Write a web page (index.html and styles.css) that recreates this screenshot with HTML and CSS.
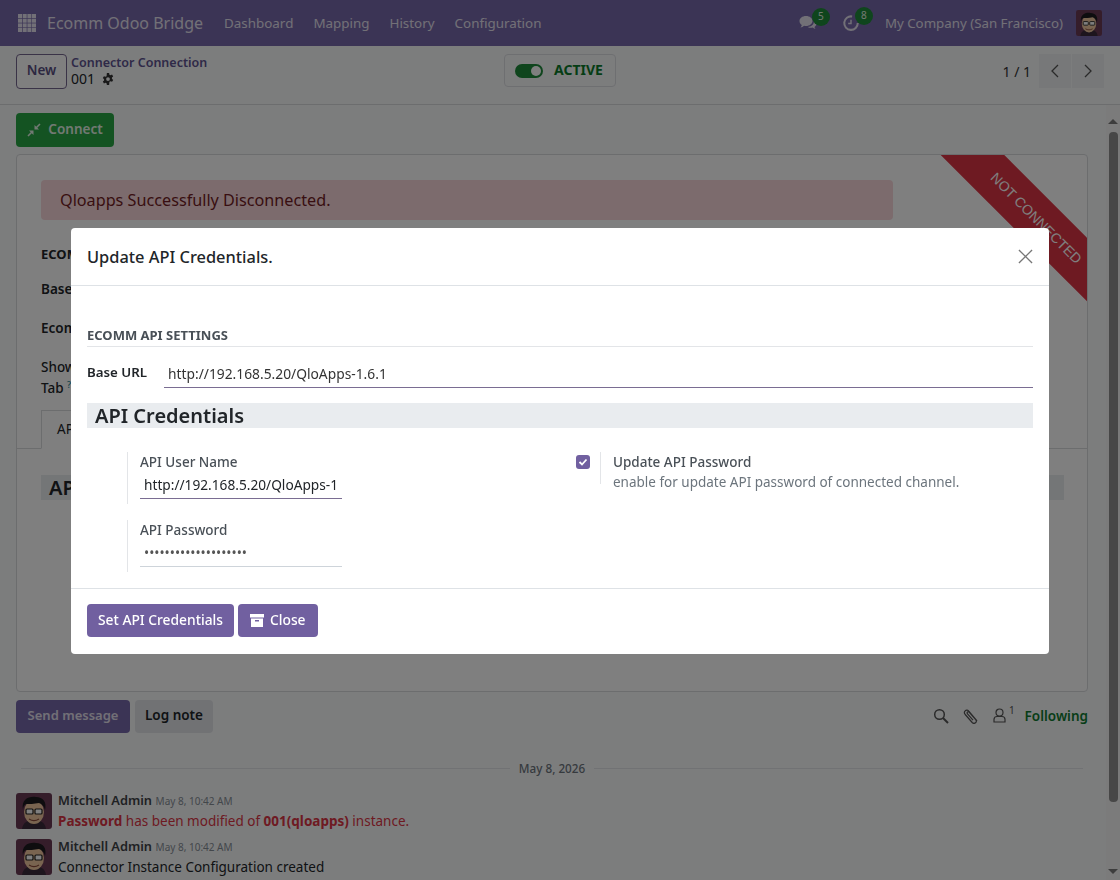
FILE: index.html
```html
<!DOCTYPE html>
<html lang="en">
<head>
    <meta charset="UTF-8">
    <title>Connector Connection</title>
    <link rel="stylesheet" href="styles.css">
</head>
<body>
    <svg class="defs" width="0" height="0">
        <symbol id="face" viewBox="0 0 36 36">
            <rect width="36" height="36" rx="3" fill="#6b3a55"/>
            <path d="M6 36c1-7 6-9 12-9s11 2 12 9z" fill="#3a2a3a"/>
            <ellipse cx="18" cy="19" rx="10" ry="12" fill="#f2c9a0"/>
            <path d="M7 17C5 6 13 3 20 4c7 0 11 5 9 13-1-4-3-6-6-7-5 1-10 1-13 1-2 1-3 3-3 6z" fill="#1c1a1e"/>
            <rect x="10" y="16" width="7" height="5" rx="1" fill="#fff" stroke="#222" stroke-width="1.2"/>
            <rect x="19" y="16" width="7" height="5" rx="1" fill="#fff" stroke="#222" stroke-width="1.2"/>
            <path d="M13 26c3 2 7 2 10 0" fill="none" stroke="#8a4a3a" stroke-width="1.2"/>
        </symbol>
    </svg>

    <nav class="navbar">
        <svg class="apps-icon" width="18" height="18" viewBox="0 0 18 18" fill="#e4e1ee">
            <rect x="0" y="0" width="4" height="4"/><rect x="4.7" y="0" width="4" height="4"/><rect x="9.4" y="0" width="4" height="4"/><rect x="14" y="0" width="4" height="4"/>
            <rect x="0" y="4.7" width="4" height="4"/><rect x="4.7" y="4.7" width="4" height="4"/><rect x="9.4" y="4.7" width="4" height="4"/><rect x="14" y="4.7" width="4" height="4"/>
            <rect x="0" y="9.4" width="4" height="4"/><rect x="4.7" y="9.4" width="4" height="4"/><rect x="9.4" y="9.4" width="4" height="4"/><rect x="14" y="9.4" width="4" height="4"/>
            <rect x="0" y="14" width="4" height="4"/><rect x="4.7" y="14" width="4" height="4"/><rect x="9.4" y="14" width="4" height="4"/><rect x="14" y="14" width="4" height="4"/>
        </svg>
        <span class="brand">Ecomm Odoo Bridge</span>
        <a class="nav-link">Dashboard</a>
        <a class="nav-link">Mapping</a>
        <a class="nav-link">History</a>
        <a class="nav-link">Configuration</a>
        <div class="nav-right">
            <span class="systray-item">
                <svg width="18" height="16" viewBox="0 0 18 16" fill="#e4e1ee"><path d="M7 1c3.700 0 6.500 2.200 6.500 5s-2.800 5-6.500 5c-.7 0-1.300-.1-1.900-.2C4 11.800 2.800 12.300 1.500 12.500c.7-.8 1.200-1.600 1.300-2.500C1.300 9.100.5 7.600.5 6 .5 3.200 3.300 1 7 1z"/><path d="M14.600 4.700C16.500 5.500 17.500 6.900 17.500 8.500c0 1.400-.8 2.600-2 3.400.1.800.6 1.500 1.200 2.100-1.100-.2-2.100-.6-3-1.400-.5.100-1 .2-1.600.2-1.300 0-2.500-.3-3.400-.9 3.500-.1 6.300-2.500 6.300-5.400 0-.6-.1-1.200-.4-1.800z"/></svg>
                <span class="badge">5</span>
            </span>
            <span class="systray-item">
                <svg width="18" height="18" viewBox="0 0 16 16" fill="none" stroke="#e4e1ee" stroke-width="1.800"><path d="M9 2.200A6 6 0 1 0 14 8"/><path d="M8 5v3.500H5.500" stroke-width="1.300"/></svg>
                <span class="badge">8</span>
            </span>
            <span class="company">My Company (San Francisco)</span>
            <svg class="nav-avatar" width="26" height="26"><use href="#face"/></svg>
        </div>
    </nav>

    <header class="control-panel">
        <div class="cp-left">
            <button class="btn-new">New</button>
            <div class="breadcrumb">
                <a class="crumb-link">Connector Connection</a>
                <div class="crumb-current">001
                    <svg width="12" height="12" viewBox="0 0 16 16" fill="#333"><path d="M6.500 0h3l.4 2.200c.5.200 1 .4 1.400.7l2.100-.8 1.500 2.600-1.700 1.400c.1.600.1 1.100 0 1.700l1.700 1.400-1.500 2.600-2.100-.8c-.4.300-.9.600-1.400.7L9.500 16h-3l-.4-2.200c-.5-.2-1-.4-1.400-.7l-2.100.8-1.500-2.600 1.700-1.400c-.1-.6-.1-1.100 0-1.700L1.100 6.800l1.500-2.600 2.100.8c.4-.3.900-.6 1.400-.7zM8 5.500a2.500 2.500 0 1 0 0 5 2.500 2.500 0 0 0 0-5z"/></svg>
                </div>
            </div>
        </div>
        <div class="active-box">
            <span class="toggle"></span>
            <span class="active-text">ACTIVE</span>
        </div>
        <div class="pager">
            <span class="pager-count">1 / 1</span>
            <div class="pager-btns">
                <span class="pager-btn"><svg width="12" height="16" viewBox="0 0 12 16" fill="none" stroke="#555" stroke-width="1.300"><path d="M9 2 3 8l6 6"/></svg></span>
                <span class="pager-btn"><svg width="12" height="16" viewBox="0 0 12 16" fill="none" stroke="#555" stroke-width="1.300"><path d="m3 2 6 6-6 6"/></svg></span>
            </div>
        </div>
    </header>

    <main class="content">
        <div class="statusbar">
            <button class="btn-connect">
                <svg width="14" height="14" viewBox="0 0 14 14" fill="#e4f2e7"><path d="M1 13l4-4M13 1 9 5" stroke="#e4f2e7" stroke-width="1.600"/><path d="M2 7.500h4.500V12zM12 6.500H7.500V2z"/></svg>
                <span class="btn-text">Connect</span>
            </button>
        </div>

        <section class="sheet">
            <div class="ribbon"><span>NOT CONNECTED</span></div>
            <div class="alert">Qloapps Successfully Disconnected.</div>
            <div class="sheet-title">ECOM</div>
            <div class="sheet-label">Base</div>
            <div class="sheet-label sheet-label-tight">Ecom</div>
            <div class="sheet-label sheet-label-wrap">Show<br>Tab <sup class="help">?</sup></div>
            <div class="tabs"><span class="tab">AP</span></div>
            <div class="sheet-band">AP</div>
        </section>

        <div class="chatter-bar">
            <div class="chatter-btns">
                <button class="btn-send"><span class="btn-text">Send message</span></button>
                <button class="btn-log"><span class="btn-text">Log note</span></button>
            </div>
            <div class="chatter-tools">
                <svg width="16" height="16" viewBox="0 0 16 16" fill="none" stroke="#555" stroke-width="1.500"><circle cx="6.500" cy="6.500" r="4.800"/><path d="m10 10 5 5" stroke-width="2"/></svg>
                <svg width="16" height="16" viewBox="0 0 16 16" fill="none" stroke="#555" stroke-width="1.200"><path d="M14 13 6 3.500C5 2 3.300 1.800 2.300 2.700 1.200 3.600 1.200 5.200 2.200 6.500l7 8c1 1 2.300 1.100 3.300.3 1-.8 1-2.200.2-3.200L6.300 4.300C5.800 3.700 5 3.600 4.500 4c-.5.500-.5 1.200 0 1.800l5.500 6.400"/></svg>
                <span class="follower">
                    <svg width="13" height="15" viewBox="0 0 13 15" fill="none" stroke="#555" stroke-width="1.200"><circle cx="6.500" cy="4.500" r="3.500"/><path d="M1 14v-2.500C1 9.500 2.500 8.500 4 8.500h5c1.500 0 3 1 3 3V14z"/></svg>
                    <sup>1</sup>
                </span>
                <span class="following">Following</span>
            </div>
        </div>

        <div class="date-sep"><span>May 8, 2026</span></div>

        <div class="message">
            <svg class="msg-avatar" width="36" height="36"><use href="#face"/></svg>
            <div>
                <div class="msg-head"><b>Mitchell Admin</b> <small>May 8, 10:42 AM</small></div>
                <div class="msg-body msg-red"><b>Password</b> has been modified of <b>001(qloapps)</b> instance.</div>
            </div>
        </div>
        <div class="message">
            <svg class="msg-avatar" width="36" height="36"><use href="#face"/></svg>
            <div>
                <div class="msg-head"><b>Mitchell Admin</b> <small>May 8, 10:42 AM</small></div>
                <div class="msg-body">Connector Instance Configuration created</div>
            </div>
        </div>
    </main>

    <div class="scrollbar">
        <span class="arrow-up"></span>
        <span class="thumb"></span>
        <span class="arrow-down"></span>
    </div>

    <div class="backdrop">
        <div class="modal">
            <div class="modal-header">
                <h4>Update API Credentials.</h4>
                <svg width="15" height="15" viewBox="0 0 16 16" fill="none" stroke="#777" stroke-width="1.400"><path d="m1 1 14 14M15 1 1 15"/></svg>
            </div>
            <div class="modal-body">
                <div class="group-title">ECOMM API SETTINGS</div>
                <div class="url-row">
                    <label>Base URL</label>
                    <div class="url-input">http://192.168.5.20/QloApps-1.6.1</div>
                </div>
                <div class="band">API Credentials</div>
                <div class="cred-grid">
                    <div class="cred-col">
                        <div class="setting">
                            <div class="setting-label">API User Name</div>
                            <div class="setting-input">http://192.168.5.20/QloApps-1</div>
                        </div>
                        <div class="setting">
                            <div class="setting-label">API Password</div>
                            <div class="setting-input setting-pass">••••••••••••••••••••</div>
                        </div>
                    </div>
                    <div class="cred-check">
                        <span class="checkbox">
                            <svg width="10" height="10" viewBox="0 0 10 10" fill="none" stroke="#fff" stroke-width="1.800"><path d="m1.500 5 2.500 2.500 4.500-5"/></svg>
                        </span>
                        <div class="setting-side">
                            <div class="setting-label">Update API Password</div>
                            <div class="setting-help">enable for update API password of connected channel.</div>
                        </div>
                    </div>
                </div>
            </div>
            <div class="modal-footer">
                <button class="btn-primary"><span class="btn-text">Set API Credentials</span></button>
                <button class="btn-primary btn-close">
                    <svg width="14" height="13" viewBox="0 0 14 13" fill="#fff"><rect x="0" y="0" width="14" height="3.500"/><path d="M1 4.500h12V13H1zM5 6v1.500h4V6z" fill-rule="evenodd"/></svg>
                    <span class="btn-text">Close</span>
                </button>
            </div>
        </div>
    </div>
</body>
</html>
```

FILE: styles.css
```css
* {
    box-sizing: border-box;
}
body {
    font-family: "Noto Sans", sans-serif;
    font-size: 13.5px;
    color: #212529;
    background-color: #f9fafb;
    margin: 0;
    height: 880px;
    overflow: hidden;
    display: flex;
    flex-direction: column;
}
button {
    font-family: inherit;
    border: none;
    cursor: pointer;
}
.btn-text {
    position: relative;
    top: -2px;
}
.defs {
    display: block;
    height: 0;
}
.navbar {
    height: 46px;
    flex: none;
    background-color: #7768ab;
    color: #e4e1ee;
    display: flex;
    align-items: center;
    padding: 0 18px;
}
.apps-icon {
    margin-right: 11px;
}
.brand {
    font-size: 16px;
    margin-right: 21px;
}
.nav-link {
    margin-right: 20px;
    font-size: 13.4px;
}
.nav-right {
    margin-left: auto;
    display: flex;
    align-items: center;
}
.systray-item {
    display: flex;
    align-items: flex-start;
    margin-right: 12px;
}
.badge {
    background-color: #1f8a3a;
    color: #e4f2e7;
    font-size: 10px;
    width: 18px;
    height: 18px;
    border-radius: 50%;
    text-align: center;
    line-height: 16px;
    margin: -7px 0 0 -5px;
}
.company {
    font-size: 13.3px;
    margin-right: 13px;
}
.nav-avatar {
    display: block;
}
.control-panel {
    height: 59px;
    flex: none;
    padding: 8px 16px 0;
    display: grid;
    grid-template-columns: 1fr auto 1fr;
    align-items: start;
    border-bottom: 1px solid #d8dadd;
}
.cp-left {
    display: flex;
    gap: 4px;
}
.btn-new {
    height: 35px;
    width: 51px;
    padding: 0 0 3px;
    background: #fff;
    border: 1px solid #75668f;
    border-radius: 4px;
    color: #5a4f82;
    font-weight: 600;
    font-size: 13.5px;
}
.breadcrumb {
    line-height: 16px;
}
.crumb-link {
    color: #5f5490;
    font-weight: 600;
    font-size: 12.5px;
}
.crumb-current {
    font-size: 14px;
    display: flex;
    align-items: center;
    gap: 7px;
}
.active-box {
    height: 33px;
    width: 112px;
    border: 1px solid #dcdfe3;
    border-radius: 4px;
    display: flex;
    align-items: center;
    gap: 11px;
    padding: 0 0 3px 10px;
}
.toggle {
    width: 28px;
    height: 14px;
    border-radius: 7px;
    background-color: #1f8a3a;
    position: relative;
    top: 2px;
}
.toggle::after {
    content: "";
    position: absolute;
    right: 2px;
    top: 2px;
    width: 10px;
    height: 10px;
    border-radius: 50%;
    background-color: #fff;
}
.active-text {
    color: #0a7a2a;
    font-weight: 700;
    font-size: 14px;
}
.pager {
    display: flex;
    justify-content: flex-end;
    align-items: center;
    gap: 8px;
}
.pager-count {
    font-size: 14px;
    color: #333;
}
.pager-btns {
    display: flex;
    gap: 1px;
}
.pager-btn {
    width: 32px;
    height: 34px;
    background-color: #eef0f2;
    display: flex;
    align-items: center;
    justify-content: center;
}
.content {
    flex: 1;
    padding: 8px 32px 0 16px;
    overflow: hidden;
}
.btn-connect {
    height: 34px;
    width: 98px;
    background-color: #28a745;
    color: #e4f2e7;
    font-weight: 600;
    font-size: 13.5px;
    border-radius: 4px;
    display: flex;
    align-items: center;
    justify-content: center;
    gap: 7px;
}
.btn-connect .btn-text {
    top: -1px;
}
.sheet {
    position: relative;
    overflow: hidden;
    height: 538px;
    margin-top: 7px;
    background-color: #fff;
    border: 1px solid #d8dadd;
    border-radius: 4px;
    padding: 25px 24px 0;
}
.ribbon {
    position: absolute;
    top: 0;
    right: 0;
    width: 148px;
    height: 148px;
    overflow: hidden;
}
.ribbon span {
    position: absolute;
    top: 41px;
    left: -23px;
    width: 240px;
    height: 45px;
    line-height: 45px;
    transform: rotate(45deg);
    background-color: #dc3545;
    color: #fff;
    text-align: center;
    font-family: "Liberation Sans", sans-serif;
    font-size: 14px;
}
.alert {
    width: 852px;
    height: 40px;
    line-height: 40px;
    padding-left: 19px;
    font-size: 16.2px;
    color: #721c24;
    background-color: #f8d7da;
    border-radius: 4px;
    margin-bottom: 25px;
}
.sheet-title {
    font-weight: 700;
    font-size: 13px;
    margin-bottom: 17px;
}
.sheet-label {
    font-weight: 600;
    line-height: 19px;
    margin-bottom: 20px;
}
.sheet-label-tight {
    margin-bottom: 19px;
}
.sheet-label-wrap {
    line-height: 21px;
    font-weight: 500;
    margin-bottom: 11px;
}
.help {
    color: #1a8a9a;
    font-size: 9px;
    line-height: 0;
}
.tabs {
    border-bottom: 1px solid #d8dadd;
    margin: 0 -24px;
    padding-left: 24px;
    height: 39px;
}
.tab {
    display: block;
    width: 200px;
    height: 39px;
    border: 1px solid #d8dadd;
    border-bottom-color: #fff;
    padding: 9px 15px;
}
.sheet-band {
    margin-top: 26px;
    height: 25px;
    width: 1023px;
    background-color: #e9ecef;
    font-size: 20px;
    font-weight: 600;
    line-height: 25px;
    padding-left: 8px;
}
.chatter-bar {
    margin-top: 8px;
    display: flex;
    justify-content: space-between;
    align-items: center;
}
.chatter-btns {
    display: flex;
    gap: 5px;
}
.btn-send {
    width: 114px;
    height: 33px;
    background-color: #7768ab;
    color: #e4e1ee;
    font-weight: 600;
    font-size: 13px;
    border-radius: 4px;
}
.btn-log {
    width: 78px;
    height: 33px;
    background-color: #e2e5e9;
    color: #212529;
    font-weight: 600;
    font-size: 13.5px;
    border-radius: 4px;
}
.chatter-tools {
    display: flex;
    align-items: center;
    gap: 14px;
    padding-bottom: 2px;
}
.follower {
    display: flex;
    align-items: flex-start;
    gap: 3px;
}
.follower sup {
    font-size: 10px;
    line-height: 10px;
    margin-top: -3px;
    color: #555;
}
.following {
    margin-left: -4px;
    color: #0f7a30;
    font-weight: 600;
}
.date-sep {
    margin-top: 27px;
    padding: 0 5px;
    display: flex;
    align-items: center;
    justify-content: center;
    font-size: 11.700px;
    color: #6c757d;
    font-weight: 500;
    gap: 9px;
}
.date-sep::before,
.date-sep::after {
    content: "";
    flex: 1;
    height: 1px;
    background-color: #e3e5e8;
}
.message {
    display: flex;
    gap: 6px;
    height: 46px;
}
.date-sep + .message {
    margin-top: 16px;
}
.msg-avatar {
    display: block;
    margin-top: 1px;
}
.msg-head {
    line-height: 17px;
}
.msg-head b {
    font-size: 12.800px;
    font-weight: 600;
    color: #3f4347;
}
.msg-head small {
    font-size: 10px;
    color: #868e96;
}
.msg-body {
    line-height: 22px;
}
.msg-red {
    color: #dc3545;
}
.scrollbar {
    position: absolute;
    top: 105px;
    right: 0;
    width: 14px;
    height: 775px;
    background-color: #f7f7f7;
    display: flex;
    flex-direction: column;
    align-items: center;
}
.arrow-up,
.arrow-down {
    position: absolute;
    width: 0;
    height: 0;
    border-left: 5px solid transparent;
    border-right: 5px solid transparent;
}
.arrow-up {
    top: 14px;
    border-bottom: 5px solid #7a7a7a;
}
.arrow-down {
    bottom: 6px;
    border-top: 5px solid #7a7a7a;
}
.thumb {
    position: absolute;
    top: 27px;
    width: 9px;
    height: 670px;
    border-radius: 4px;
    background-color: #8f8f8f;
}
.backdrop {
    position: fixed;
    inset: 0;
    background-color: rgba(0, 0, 0, 0.5);
    display: flex;
    justify-content: center;
    align-items: flex-start;
    padding-top: 228px;
}
.modal {
    width: 978px;
    height: 426px;
    background-color: #fff;
    border-radius: 4px;
    display: flex;
    flex-direction: column;
}
.modal-header {
    height: 58px;
    flex: none;
    display: flex;
    align-items: center;
    justify-content: space-between;
    padding: 0 16px;
    border-bottom: 1px solid #dee2e6;
}
.modal-header h4 {
    margin: 0;
    font-size: 16.4px;
    font-weight: 500;
}
.modal-body {
    flex: 1;
    padding: 41px 16px 0;
}
.group-title {
    font-weight: 700;
    font-size: 13px;
    color: #495057;
    line-height: 17px;
    padding-bottom: 2px;
    border-bottom: 1px solid #e3e5e8;
}
.url-row {
    display: flex;
    margin-top: 14px;
}
.url-row label {
    width: 77px;
    font-size: 13.3px;
    font-weight: 600;
    line-height: 22px;
}
.url-input {
    flex: 1;
    height: 27px;
    font-size: 13.8px;
    line-height: 25px;
    padding-left: 4px;
    border-bottom: 1px solid #7a6d92;
    color: #333;
}
.band {
    margin-top: 15px;
    height: 25px;
    line-height: 25px;
    background-color: #e9ecef;
    font-size: 20px;
    font-weight: 600;
    padding-left: 8px;
}
.cred-grid {
    margin-top: 24px;
    padding-left: 40px;
    display: grid;
    grid-template-columns: 449px 1fr;
}
.cred-col {
    display: flex;
    flex-direction: column;
    gap: 16px;
}
.setting {
    width: 215px;
    border-left: 1px solid #e3e5e8;
    padding-left: 12px;
    height: 52px;
}
.setting-label {
    font-weight: 500;
    line-height: 20px;
    color: #495057;
}
.setting-input {
    height: 26px;
    margin-top: 1px;
    font-size: 13.7px;
    line-height: 24px;
    padding-left: 4px;
    border-bottom: 1px solid #7a6d92;
    overflow: hidden;
    white-space: nowrap;
}
.setting-pass {
    border-bottom-color: #ced4da;
    color: #555;
}
.cred-check {
    display: flex;
    gap: 10px;
}
.checkbox {
    width: 14px;
    height: 14px;
    margin-top: 3px;
    background-color: #7160a0;
    border-radius: 3px;
    display: flex;
    align-items: center;
    justify-content: center;
}
.setting-side {
    border-left: 1px solid #e3e5e8;
    padding-left: 12px;
    height: 32px;
}
.setting-help {
    color: #6c757d;
    line-height: 20px;
}
.modal-footer {
    height: 66px;
    flex: none;
    border-top: 1px solid #dee2e6;
    display: flex;
    align-items: center;
    gap: 4px;
    padding: 0 16px 2px;
}
.btn-primary {
    height: 33px;
    padding: 0 11px;
    background-color: #7160a0;
    color: #fff;
    font-weight: 500;
    font-size: 13.8px;
    border-radius: 4px;
    display: flex;
    align-items: center;
    gap: 6px;
}
.btn-primary .btn-text {
    top: -1px;
}
.btn-close {
    padding: 0 12px;
}
```
